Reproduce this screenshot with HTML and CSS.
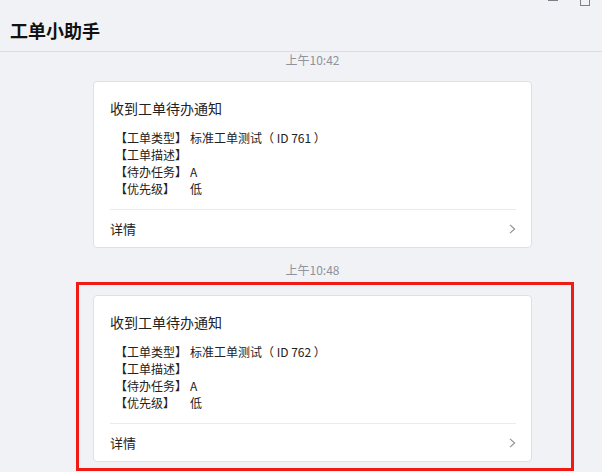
FILE: index.html
```html
<!DOCTYPE html>
<html lang="zh-CN">
<head>
<meta charset="utf-8">
<link rel="stylesheet" href="styles.css">
</head>
<body>
<div class="app">
  <header class="header">
    <h1 class="title">工单小助手</h1>
    <div class="win-controls">
      <span class="win-min"></span>
      <span class="win-max"></span>
    </div>
  </header>
  <main class="main">
    <div class="list">
      <div class="time time-first">上午10:42</div>
      <div class="card">
        <div class="card-title">收到工单待办通知</div>
        <div class="fields">
          <span class="label">【工单类型】</span><span class="value">标准工单测试（ ID 761 ）</span>
          <span class="label">【工单描述】</span><span class="value"></span>
          <span class="label">【待办任务】</span><span class="value">A</span>
          <span class="label">【优先级】</span><span class="value">低</span>
        </div>
        <div class="card-footer">
          <span>详情</span>
          <svg class="chev" width="7" height="10" viewBox="0 0 7 10"><path d="M1 0.8 L5.6 5 L1 9.2" fill="none" stroke="#8a8e96" stroke-width="1.1"/></svg>
        </div>
      </div>
      <div class="time">上午10:48</div>
      <div class="highlight">
        <div class="card">
          <div class="card-title">收到工单待办通知</div>
          <div class="fields">
            <span class="label">【工单类型】</span><span class="value">标准工单测试（ ID 762 ）</span>
            <span class="label">【工单描述】</span><span class="value"></span>
            <span class="label">【待办任务】</span><span class="value">A</span>
            <span class="label">【优先级】</span><span class="value">低</span>
          </div>
          <div class="card-footer">
            <span>详情</span>
            <svg class="chev" width="7" height="10" viewBox="0 0 7 10"><path d="M1 0.8 L5.6 5 L1 9.2" fill="none" stroke="#8a8e96" stroke-width="1.1"/></svg>
          </div>
        </div>
      </div>
    </div>
  </main>
</div>
</body>
</html>
```

FILE: styles.css
```css
* { box-sizing: border-box; }
html, body {
  margin: 0;
  padding: 0;
  background: #f1f2f5;
  font-family: "Noto Sans CJK SC", "Microsoft YaHei", sans-serif;
  color: #222;
}
.app {
  width: 602px;
  height: 472px;
  overflow: hidden;
  position: relative;
}
.header {
  height: 52px;
  border-bottom: 1px solid #dcdde1;
  padding: 19px 0 0 10px;
  position: relative;
  background: #f1f2f5;
}
.title {
  margin: 0;
  font-size: 18px;
  line-height: 22px;
  font-weight: bold;
  color: #111;
}
.win-controls {
  position: absolute;
  top: 0;
  right: 0;
}
.win-min {
  position: absolute;
  left: -54px;
  top: 0;
  width: 10px;
  height: 1px;
  background: #7d8089;
}
.win-max {
  position: absolute;
  left: -22px;
  top: -5px;
  width: 10px;
  height: 11px;
  border: 1px solid #7d8089;
}
.main {
  height: 420px;
}
.list {
  margin: 0 0 0 93px;
  width: 439px;
}
.time {
  font-size: 12px;
  line-height: 16px;
  text-align: center;
  color: #8f939b;
}
.time-first {
  line-height: 14px;
  padding-top: 1px;
  margin-bottom: 14px;
}
.card {
  background: #fff;
  border: 1px solid #dfe0e3;
  border-radius: 4px;
  padding-top: 16px;
  margin-bottom: 14px;
}
.card-title {
  font-size: 14px;
  line-height: 20px;
  padding: 0 16px;
  color: #222;
}
.fields {
  display: grid;
  grid-template-columns: 72px 1fr;
  column-gap: 3px;
  font-size: 12px;
  line-height: 17px;
  margin: 11px 16px 12px;
  padding-left: 5px;
  color: #222;
}
.value { min-height: 17px; }
.card-footer {
  margin: 0 15px 0 16px;
  border-top: 1px solid #ebebed;
  height: 38px;
  display: flex;
  align-items: center;
  justify-content: space-between;
  font-size: 13px;
  color: #222;
}
.chev { display: block; margin-top: 1px; }
.highlight {
  margin: 4px 0 0 -17px;
  width: 498px;
  border: 3px solid #f01b14;
  padding: 10px 39px 6px 14px;
}
.highlight .card { margin-bottom: 0; }
```
